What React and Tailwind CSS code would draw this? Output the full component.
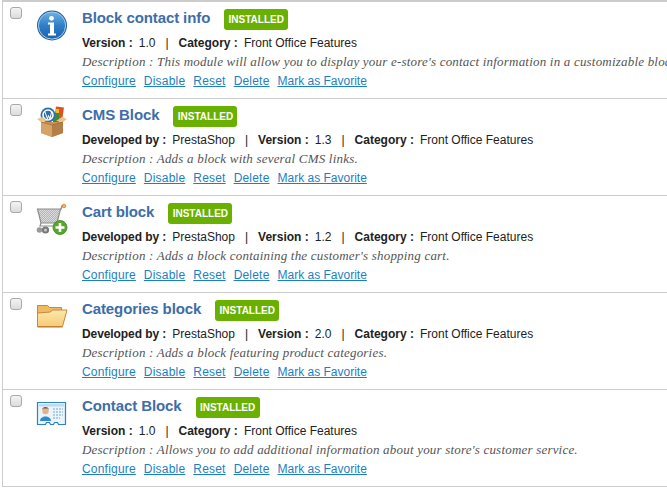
const SANS = '"Liberation Sans", Arial, sans-serif';

function InfoIcon() {
  return (
    <svg width="32" height="32" viewBox="0 0 32 32">
      <defs>
        <linearGradient id="ig" x1="0" y1="0" x2="0" y2="1">
          <stop offset="0" stopColor="#6fb0e4" />
          <stop offset="0.5" stopColor="#2f7fc8" />
          <stop offset="1" stopColor="#1c62ad" />
        </linearGradient>
      </defs>
      <circle cx="16" cy="16.5" r="15" fill="#1f5f9f" />
      <circle cx="16" cy="16.5" r="13.6" fill="url(#ig)" stroke="#a9d0ef" strokeWidth="1" />
      <circle cx="15.5" cy="9.3" r="2.4" fill="#fff" />
      <path d="M12 13.5h6v11h2v2h-8v-2h2v-9h-2z" fill="#fff" />
    </svg>
  );
}

function BoxIcon() {
  return (
    <svg width="32" height="32" viewBox="0 0 32 32">
      <rect x="19" y="1" width="8" height="14" fill="#d9541e" transform="rotate(8 23 8)" />
      <rect x="20" y="3" width="3" height="5" fill="#f2b632" />
      <rect x="17" y="7" width="6" height="9" fill="#3d8a3a" />
      <circle cx="12" cy="9" r="7.5" fill="#2c6fa8" />
      <circle cx="12" cy="9" r="5" fill="none" stroke="#fff" strokeWidth="1.6" />
      <path d="M9 6l2.5 7 1-3.5 1.5 3.5 1.5-7" fill="none" stroke="#fff" strokeWidth="1" />
      <path d="M5 16h22v11l-11 4-11-4z" fill="#c8925a" />
      <path d="M5 16l11 3v12l-11-4z" fill="#d6a265" />
      <path d="M27 16l-11 3v12l11-4z" fill="#b47f46" />
      <path d="M5 16l-4-3 5-2 6 4zM27 16l4-3-5-2-6 4z" fill="#e9c48d" />
      <path d="M5 16l11 3 11-3" fill="none" stroke="#8f6432" strokeWidth="0.6" />
    </svg>
  );
}

function CartIcon() {
  return (
    <svg width="32" height="34" viewBox="0 0 32 34">
      <defs>
        <pattern id="chk" width="2" height="2" patternUnits="userSpaceOnUse">
          <rect width="2" height="2" fill="#dcdcdc" />
          <rect width="1" height="1" fill="#b4b4b4" />
          <rect x="1" y="1" width="1" height="1" fill="#b4b4b4" />
        </pattern>
      </defs>
      <path d="M1.5 6h23l-3.5 14H5z" fill="url(#chk)" stroke="#8c8c8c" strokeWidth="1.2" />
      <path d="M24.5 7l2-5" stroke="#8c8c8c" strokeWidth="1.4" fill="none" />
      <circle cx="28" cy="3" r="1.8" fill="#f0b46a" stroke="#c97a24" strokeWidth="0.7" />
      <path d="M5 20l-1 3h18" stroke="#8c8c8c" strokeWidth="1.2" fill="none" />
      <circle cx="9.5" cy="27" r="3.6" fill="#777" />
      <circle cx="9.5" cy="27" r="1.5" fill="#ccc" />
      <circle cx="3.5" cy="27" r="2.8" fill="#999" />
      <circle cx="24" cy="24.5" r="7" fill="#58a52c" stroke="#3f8a1d" strokeWidth="0.8" />
      <path d="M24 20v9M19.5 24.5h9" stroke="#fff" strokeWidth="2.6" />
    </svg>
  );
}

function FolderIcon() {
  return (
    <svg width="32" height="32" viewBox="0 0 32 32">
      <defs>
        <linearGradient id="fg" x1="0" y1="0" x2="0" y2="1">
          <stop offset="0" stopColor="#fde7ae" />
          <stop offset="1" stopColor="#f7cb74" />
        </linearGradient>
      </defs>
      <path d="M1.5 5.5h10l2 2h12v6H1.5z" fill="#f0bb60" stroke="#c8873a" strokeWidth="1" />
      <path d="M1.5 26.5V13l13-1 2-2h14.5L26.5 26.5z" fill="url(#fg)" stroke="#c8873a" strokeWidth="1" />
      <path d="M1.5 27h25" stroke="#b9782f" strokeWidth="1" />
    </svg>
  );
}

function CardIcon() {
  return (
    <svg width="32" height="32" viewBox="0 0 32 32">
      <path d="M1.5 5.5h28v22h-7l-1-2h-3l-1 2h-3l-1-2h-3l-1 2h-8z" fill="#eaf4fb" stroke="#2b84bf" strokeWidth="1.2" />
      <rect x="3" y="7" width="25" height="2.5" fill="#bcdcf1" />
      <circle cx="9.5" cy="14" r="3.2" fill="#e7b287" />
      <path d="M6 13c0-4 7-4 7 0l-1-1.5H7z" fill="#7a4a22" />
      <path d="M4 24c0-6 11-6 11 0z" fill="#2f8ad0" />
      <path d="M17 12h10M17 15h10M17 18h10M17 21h7" stroke="#7aa7c6" strokeWidth="1" strokeDasharray="2 1" />
    </svg>
  );
}

function Sep() {
  return <span className="mx-[10px] font-normal">|</span>;
}

function Meta({ label, value, tight }) {
  return (
    <span>
      <b className={tight ? "font-bold tracking-[-0.08px]" : "font-bold"}>{label} :</b>
      <span className="ml-[6px]">{value}</span>
    </span>
  );
}

function Row({ icon, title, dev, version, desc }) {
  return (
    <div className="flex h-[97px] border-b border-[#cccccc] pl-[7px]">
      <div className="w-[15px] shrink-0 pt-[5px]">
        <div className="w-[12px] h-[12px] rounded-[3px] border border-[#a9a9a9] bg-gradient-to-b from-[#f4f4f4] to-[#dcdcdc]"></div>
      </div>
      <div className="w-[57px] shrink-0 pl-[11px] pt-[7px]">{icon}</div>
      <div className="flex flex-col whitespace-nowrap">
        <div className="flex items-center h-[22px] mt-[5px]">
          <span className="text-[15px] leading-[22px] font-bold tracking-[-0.1px] text-[#3d6ea8]">{title}</span>
          <span className="ml-[14px] mt-[3px] h-[21px] w-[64px] rounded-[3px] bg-[#69b000] text-white text-[10px] font-bold flex items-center justify-center">INSTALLED</span>
        </div>
        <div className="text-[12px] leading-[16px] mt-[6px] text-[#222222]">
          {dev && <><Meta label="Developed by" value="PrestaShop" tight /><Sep /></>}
          <Meta label="Version" value={version} />
          <Sep />
          <Meta label="Category" value="Front Office Features" />
        </div>
        <div className="text-[13px] leading-[16px] mt-[3px] italic tracking-[0.2px] text-[#555555]" style={{ fontFamily: '"Liberation Serif", serif' }}>
          Description : {desc}
        </div>
        <div className="text-[12px] leading-[16px] mt-[3px] flex gap-[8px] text-[#1b7fc4]">
          <a className="underline tracking-[0.2px]">Configure</a>
          <a className="underline tracking-[0.2px]">Disable</a>
          <a className="underline tracking-[0.2px]">Reset</a>
          <a className="underline tracking-[0.2px]">Delete</a>
          <a className="underline">Mark as Favorite</a>
        </div>
      </div>
    </div>
  );
}

export default function App() {
  return (
    <div className="w-[667px] h-[488px] overflow-hidden bg-white" style={{ fontFamily: SANS }}>
      <div className="ml-[2px] border-l border-t-2 border-[#cccccc]">
        <Row icon={<InfoIcon />} title="Block contact info" version="1.0" desc="This module will allow you to display your e-store's contact information in a customizable block" />
        <Row icon={<BoxIcon />} title="CMS Block" dev version="1.3" desc="Adds a block with several CMS links." />
        <Row icon={<CartIcon />} title="Cart block" dev version="1.2" desc="Adds a block containing the customer's shopping cart." />
        <Row icon={<FolderIcon />} title="Categories block" dev version="2.0" desc="Adds a block featuring product categories." />
        <Row icon={<CardIcon />} title="Contact Block" version="1.0" desc="Allows you to add additional information about your store's customer service." />
      </div>
    </div>
  );
}
